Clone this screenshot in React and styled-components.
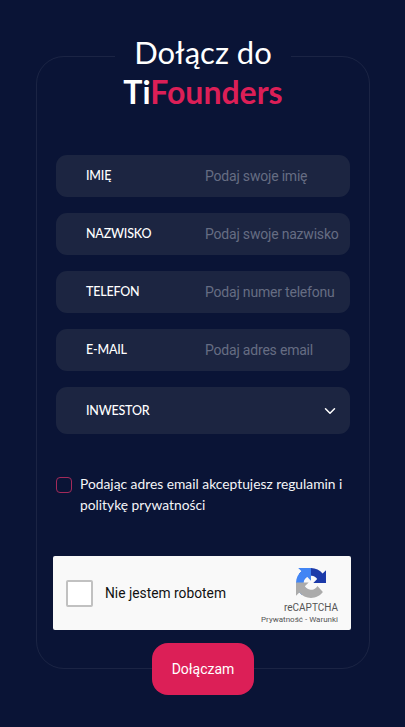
import styled, { createGlobalStyle } from "styled-components";
import { ChevronDown } from "lucide-react";

const GlobalStyle = createGlobalStyle`
  html, body {
    margin: 0;
    padding: 0;
    background: #0a1436;
  }
  * {
    box-sizing: border-box;
  }
`;

const Page = styled.div`
  width: 405px;
  height: 727px;
  overflow: hidden;
  background: #0a1436;
  padding: 56px 35px 0 36px;
`;

const Card = styled.div`
  height: 613px;
  border: 1px solid rgba(255, 255, 255, 0.07);
  border-radius: 28px;
  display: flex;
  flex-direction: column;
  align-items: center;
`;

const Title = styled.h1`
  flex: none;
  margin: -24px 0 0;
  padding: 0 8px;
  background: #0a1436;
  color: #fff;
  font-family: "Lato", sans-serif;
  font-size: 31px;
  font-weight: 400;
  line-height: 39px;
  text-align: center;
`;

const Brand = styled.span`
  display: block;
  font-size: 32px;
  font-weight: 700;
  color: #fff;
`;

const Accent = styled.span`
  color: #dc1f57;
`;

const Form = styled.div`
  flex: none;
  align-self: stretch;
  margin-top: 44px;
  padding: 0 19px;
  display: flex;
  flex-direction: column;
  gap: 16px;
`;

const Field = styled.div`
  height: ${(p) => (p.$tall ? "47px" : "42px")};
  padding: 0 11px 0 30px;
  border-radius: 11px;
  background: #1c2541;
  display: flex;
  align-items: center;
  justify-content: space-between;
`;

const Label = styled.span`
  width: 119px;
  flex: none;
  padding-bottom: 1px;
  color: #fff;
  font-family: "Lato", sans-serif;
  font-size: 12.5px;
  font-weight: 500;
  letter-spacing: -0.2px;
`;

const Placeholder = styled.span`
  flex: 1;
  color: #666d83;
  font-family: "Roboto", sans-serif;
  font-size: 14px;
  letter-spacing: -0.2px;
  white-space: nowrap;
`;

const Arrow = styled(ChevronDown)`
  color: #fff;
`;

const Agreement = styled.div`
  flex: none;
  align-self: stretch;
  margin-top: 39px;
  padding: 0 19px;
  display: flex;
  gap: 8px;
`;

const Tick = styled.span`
  width: 16px;
  height: 16px;
  flex: none;
  margin-top: 4px;
  border: 1.5px solid #a32a5a;
  border-radius: 4px;
`;

const AgreementText = styled.p`
  margin: 0;
  color: #f4f5f8;
  font-family: "Lato", sans-serif;
  font-size: 13.8px;
  line-height: 21px;
`;

const Captcha = styled.div`
  flex: none;
  align-self: flex-start;
  width: 298px;
  height: 74px;
  margin: 41px 0 0 16px;
  padding: 0 13px 0 13px;
  background: #f9f9f9;
  border-radius: 2px;
  display: flex;
  align-items: center;
`;

const CaptchaBox = styled.span`
  width: 27px;
  height: 27px;
  flex: none;
  background: #fff;
  border: 2px solid #c1c1c1;
  border-radius: 2px;
`;

const CaptchaLabel = styled.span`
  margin-left: 12px;
  flex: 1;
  color: #111;
  font-family: "Roboto", sans-serif;
  font-size: 13.8px;
`;

const CaptchaBrand = styled.div`
  flex: none;
  padding-top: 6px;
  display: flex;
  flex-direction: column;
  align-items: flex-end;
  font-family: "Roboto", sans-serif;
  color: #555;
`;

const CaptchaLogo = styled.svg`
  margin-right: 12px;
`;

const CaptchaName = styled.span`
  margin-top: 3px;
  font-size: 10px;
  line-height: 13px;
`;

const CaptchaLinks = styled.span`
  font-size: 8px;
  line-height: 11px;
  white-space: nowrap;
`;

const Submit = styled.button`
  width: 102px;
  height: 52px;
  margin-top: 13px;
  flex: none;
  border: 0;
  border-radius: 16px;
  background: #dc1f57;
  color: #fff;
  font-family: "Roboto", sans-serif;
  font-size: 14px;
`;

const fields = [
  { label: "IMIĘ", placeholder: "Podaj swoje imię" },
  { label: "NAZWISKO", placeholder: "Podaj swoje nazwisko" },
  { label: "TELEFON", placeholder: "Podaj numer telefonu" },
  { label: "E-MAIL", placeholder: "Podaj adres email" },
];

function RecaptchaLogo() {
  return (
    <CaptchaLogo width="30" height="30" viewBox="0 0 64 64" aria-hidden="true">
      <path
        d="M64 31.955l-.033-1.37V4.687l-7.16 7.16C50.948 4.674 42.033.093 32.05.093c-10.4 0-19.622 4.96-25.458 12.64l11.736 11.86c1.15-2.127 2.784-3.954 4.768-5.33 2.05-1.6 4.952-2.906 9.015-2.906.49 0 .87.057 1.15.164 5.036.398 9.4 3.177 11.973 7.2l-8.307 8.307 26.3.006"
        fill="#1c3aa9"
      />
      <path
        d="M31.9 0l-1.37.033H4.63l7.16 7.16C4.617 13.052.036 21.967.036 31.95c0 10.4 4.96 19.622 12.64 25.458l11.86-11.736c-2.127-1.15-3.954-2.784-5.33-4.768-1.6-2.05-2.906-4.952-2.906-9.015 0-.49.057-.87.164-1.15.398-5.036 3.177-9.4 7.2-11.973l8.307 8.307L31.9 0"
        fill="#4285f4"
      />
      <path
        d="M0 31.95l.033 1.37v25.9l7.16-7.16c5.86 7.173 14.775 11.754 24.76 11.754 10.4 0 19.622-4.96 25.458-12.64L45.674 38.3c-1.15 2.127-2.784 3.954-4.768 5.33-2.05 1.6-4.952 2.906-9.015 2.906-.49 0-.87-.057-1.15-.164-5.036-.398-9.4-3.177-11.973-7.2l8.307-8.307-26.3.006"
        fill="#ababab"
      />
    </CaptchaLogo>
  );
}

function App() {
  return (
    <>
      <GlobalStyle />
      <Page>
        <Card>
          <Title>
            Dołącz do
            <Brand>
              Ti<Accent>Founders</Accent>
            </Brand>
          </Title>
          <Form>
            {fields.map((field) => (
              <Field key={field.label}>
                <Label>{field.label}</Label>
                <Placeholder>{field.placeholder}</Placeholder>
              </Field>
            ))}
            <Field $tall>
              <Label>INWESTOR</Label>
              <Arrow size={18} strokeWidth={2} />
            </Field>
          </Form>
          <Agreement>
            <Tick />
            <AgreementText>
              Podając adres email akceptujesz regulamin i politykę prywatności
            </AgreementText>
          </Agreement>
          <Captcha>
            <CaptchaBox />
            <CaptchaLabel>Nie jestem robotem</CaptchaLabel>
            <CaptchaBrand>
              <RecaptchaLogo />
              <CaptchaName>reCAPTCHA</CaptchaName>
              <CaptchaLinks>Prywatność - Warunki</CaptchaLinks>
            </CaptchaBrand>
          </Captcha>
          <Submit>Dołączam</Submit>
        </Card>
      </Page>
    </>
  );
}

export default App;
